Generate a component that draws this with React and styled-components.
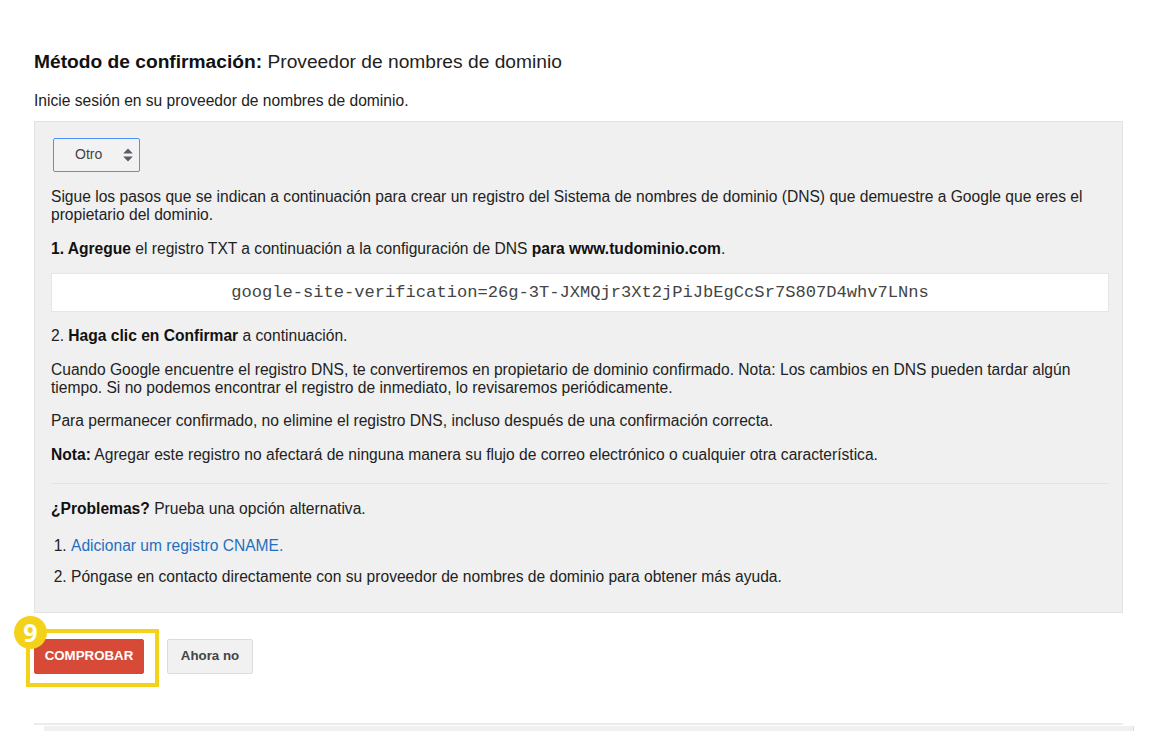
import React from "react";
import styled, { createGlobalStyle } from "styled-components";

const Global = createGlobalStyle`
  html, body { margin: 0; padding: 0; background: #fff; }
  body { font-family: "Liberation Sans", Arial, sans-serif; color: #222; height: 731px; overflow: hidden; }
`;
const Page = styled.div`
  width: 1156px; height: 731px; box-sizing: border-box; padding: 51px 33px 0 34px; overflow: hidden;
`;
const Title = styled.h2`
  margin: 0; font-size: 19.2px; line-height: 22px; font-weight: 400; color: #222;
  b { font-weight: 700; color: #111; }
`;
const Intro = styled.p`
  margin: 19px 0 0; font-size: 15.6px; line-height: 18px; color: #222;
`;
const Panel = styled.section`
  margin-top: 11px; height: 492px; box-sizing: border-box; background: #f0f0f0;
  border: 1px solid #e3e3e3; padding: 16px 13px 0 16px;
`;
const Select = styled.div`
  margin-left: 2px; width: 87px; height: 34px; box-sizing: border-box; border: 1px solid #4d90fe;
  border-radius: 2px; background: #f2f2f2; display: flex; align-items: center; padding: 0 6px 2px 21px;
  justify-content: space-between; font-size: 14px; color: #444;
  svg { display: block; position: relative; top: 1px; }
`;
const Para = styled.p`
  margin: ${p => p.$top ?? 15.6}px 0 0; font-size: 15.6px; line-height: 18px; color: #222;
  b { font-weight: 700; color: #111; }
`;
const Code = styled.div`
  margin-top: 15px; height: 39px; box-sizing: border-box; background: #fff; border: 1px solid #e6e6e6;
  display: flex; align-items: center; justify-content: center;
  font-family: "Liberation Mono", "Courier New", monospace; font-size: 17.1px; color: #444;
`;
const Rule = styled.hr`
  margin: 19px 0 0; border: 0; border-top: 1px solid #e3e3e3;
`;
const Steps = styled.ol`
  margin: 19px 0 0; padding: 0 0 0 20px; font-size: 15.6px; line-height: 18px; color: #222;
  li + li { margin-top: 13px; }
`;
const Link = styled.a`
  color: #1f6fbd; text-decoration: none;
`;
const Actions = styled.div`
  position: relative; margin-top: 26px; display: flex; gap: 23px;
`;
const Button = styled.button`
  height: 35px; box-sizing: border-box; border-radius: 2px; font-family: inherit; font-size: 13.3px; font-weight: 700; padding: 0 0 3px;
  width: ${p => p.$w}px;
  background: ${p => p.$primary ? "#d84a38" : "#f1f1f1"};
  color: ${p => p.$primary ? "#fff" : "#444"};
  border: 1px solid ${p => p.$primary ? "#d84a38" : "#dcdcdc"};
`;
const Frame = styled.div`
  position: absolute; left: -8px; top: -10px; width: 133px; height: 58px; box-sizing: border-box;
  border: 4px solid #f4d21a; pointer-events: none;
`;
const Badge = styled.div`
  position: absolute; left: -20px; top: -23px; width: 33px; height: 33px; border-radius: 50%; background: #f4d21a; color: #fff;
  display: flex; align-items: center; justify-content: center; font-family: "Open Sans", sans-serif; font-weight: 700; font-size: 25px; line-height: 1;
`;
const BottomRule = styled.div`
  margin-top: 49px; height: 0; border-top: 2px solid #ececec;
`;
const BottomBar = styled.div`
  margin: 1px -11px 0 10px; height: 10px; background: #f0f0f0; border-right: 1px solid #ddd;
`;

export default function App() {
  return (
    <Page>
      <Global />
      <Title><b>Método de confirmación:</b> Proveedor de nombres de dominio</Title>
      <Intro>Inicie sesión en su proveedor de nombres de dominio.</Intro>
      <Panel>
        <Select>
          Otro
          <svg width="10" height="14" viewBox="0 0 10 14" fill="#5f5a66"><path d="M5 0.5 9.8 5.5H.2ZM.2 8.5H9.8L5 13.5Z" /></svg>
        </Select>
        <Para $top={16}>Sigue los pasos que se indican a continuación para crear un registro del Sistema de nombres de dominio (DNS) que demuestre a Google que eres el propietario del dominio.</Para>
        <Para><b>1. Agregue</b> el registro TXT a continuación a la configuración de DNS <b>para www.tudominio.com</b>.</Para>
        <Code>google-site-verification=26g-3T-JXMQjr3Xt2jPiJbEgCcSr7S807D4whv7LNns</Code>
        <Para>2. <b>Haga clic en Confirmar</b> a continuación.</Para>
        <Para>Cuando Google encuentre el registro DNS, te convertiremos en propietario de dominio confirmado. Nota: Los cambios en DNS pueden tardar algún tiempo. Si no podemos encontrar el registro de inmediato, lo revisaremos periódicamente.</Para>
        <Para>Para permanecer confirmado, no elimine el registro DNS, incluso después de una confirmación correcta.</Para>
        <Para><b>Nota:</b> Agregar este registro no afectará de ninguna manera su flujo de correo electrónico o cualquier otra característica.</Para>
        <Rule />
        <Para $top={16}><b>¿Problemas?</b> Prueba una opción alternativa.</Para>
        <Steps>
          <li><Link href="#">Adicionar um registro CNAME.</Link></li>
          <li>Póngase en contacto directamente con su proveedor de nombres de dominio para obtener más ayuda.</li>
        </Steps>
      </Panel>
      <Actions>
        <Button $primary $w={110}>COMPROBAR</Button>
        <Button $w={86}>Ahora no</Button>
        <Frame />
        <Badge>9</Badge>
      </Actions>
      <BottomRule />
      <BottomBar />
    </Page>
  );
}
